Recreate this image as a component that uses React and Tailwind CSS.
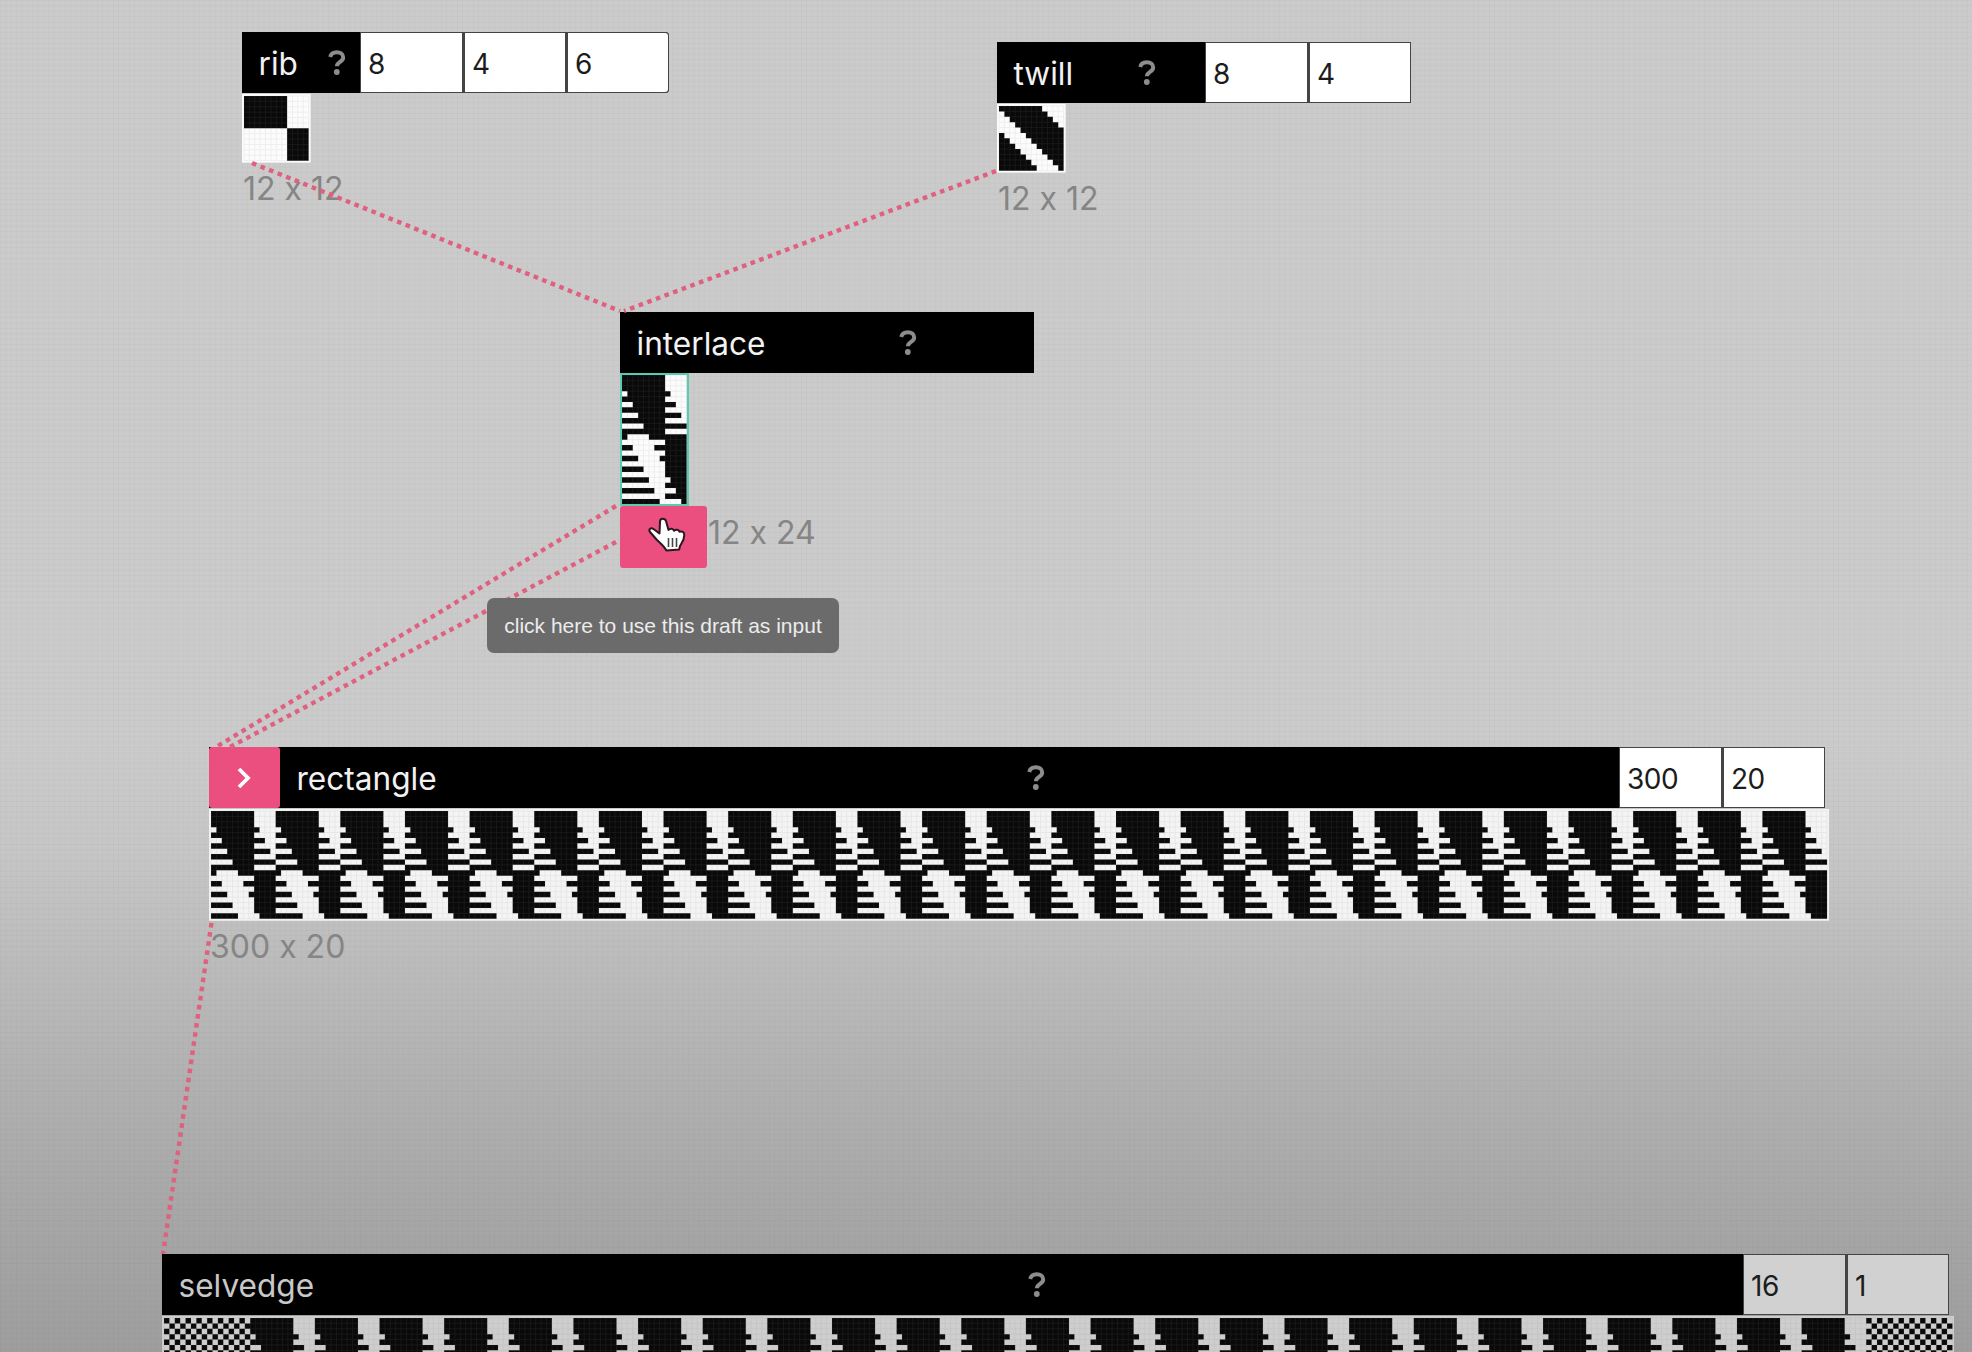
const SANS = "font-['Inter','Liberation_Sans',sans-serif]";
const CELL = 5.387;

const mod = (n, m) => ((n % m) + m) % m;
const rib = (r, c) => (mod(r, 12) < 6 ? mod(c, 12) < 8 : mod(c, 12) >= 8);
const twill = (r, c) => mod(c - r, 12) < 8;
const interlace = (r, c) => (r % 2 === 0 ? rib(r / 2, c) : twill((r - 1) / 2, c));
const selvedge = (r, c) => (c < 16 || c >= 316 ? (r + c) % 2 === 0 : interlace(r, c - 16));

function Draft({ cols, rows, fn, pad = 2, base = '#fcfcfc', ink = '#090909' }) {
  const w = cols * CELL;
  const h = rows * CELL;
  let d = '';
  for (let r = 0; r < rows; r++) {
    let c = 0;
    while (c < cols) {
      if (!fn(r, c)) { c++; continue; }
      let e = c;
      while (e < cols && fn(r, e)) e++;
      d += `M${(c * CELL).toFixed(2)} ${(r * CELL).toFixed(2)}h${((e - c) * CELL).toFixed(2)}v${CELL}H${(c * CELL).toFixed(2)}z`;
      c = e;
    }
  }
  let g = '';
  for (let c = 0; c <= cols; c++) g += `M${(c * CELL).toFixed(2)} 0v${h.toFixed(2)}`;
  for (let r = 0; r <= rows; r++) g += `M0 ${(r * CELL).toFixed(2)}h${w.toFixed(2)}`;
  return (
    <svg className="block shrink-0" width={w + pad * 2} height={h + pad * 2} viewBox={`${-pad} ${-pad} ${w + pad * 2} ${h + pad * 2}`}>
      <rect x={-pad} y={-pad} width={w + pad * 2} height={h + pad * 2} fill={base} />
      <path d={d} fill={ink} />
      <path d={g} stroke="#8a8a8a" strokeWidth="0.9" opacity="0.12" />
    </svg>
  );
}

function Help() {
  return (
    <svg className="mt-[18px] shrink-0" width="18" height="26" viewBox="0 0 18 26" fill="none">
      <path d="M2.2 7C3 3.8 5.6 2.2 8.8 2.2c3.600 0 6.400 2.100 6.400 5.300 0 4.600-6.300 4.300-6.300 8.800" stroke="#8d8d8d" strokeWidth="4" />
      <circle cx="8.800" cy="22" r="2.900" fill="#8d8d8d" />
    </svg>
  );
}

function Field({ value, first, className = 'bg-white' }) {
  return (
    <div className={`flex items-center border-y border-r border-[#444] pt-[2px] pl-[7px] text-[28px] tracking-[-0.5px] text-[#1c1c1c] ${first ? 'w-[103px] border-l' : 'w-[103px] border-l-2'} ${className}`}>
      {value}
    </div>
  );
}

function Header({ name, width, nameWidth, fields = [], fieldClass, lead, nameClass = 'text-[#f2f2f2]' }) {
  return (
    <div className={`flex h-[61px] bg-black ${width}`}>
      {lead}
      <div className={`flex items-center pt-[2px] pl-[16.500px] text-[31.600px] leading-none ${nameWidth} ${nameClass}`}>{name}</div>
      <Help />
      <div className="ml-auto flex">
        {fields.map((f, i) => (
          <Field key={f} value={f} first={i === 0} className={fieldClass} />
        ))}
      </div>
    </div>
  );
}

const Size = ({ children, className = 'pt-[8px]' }) => (
  <div className={`pl-px text-[32px] leading-[34px] whitespace-nowrap text-[#858585] ${className}`}>{children}</div>
);

const links = [
  [252, 163, 620, 311],
  [996, 171, 624, 311],
  [616, 506, 216, 747],
  [616, 542, 230, 747],
  [211.500, 923, 163, 1254],
];

export default function App() {
  return (
    <div className={`relative h-[1352px] w-[1972px] overflow-hidden bg-[linear-gradient(180deg,#cbcbcb_0%,#cbcbcb_55%,#c6c6c6_63%,#bcbcbc_71%,#b0b0b0_81%,#a5a5a5_92%,#9e9e9e_100%)] [font-feature-settings:'calt'_0] ${SANS}`}>
      <div className="absolute inset-0 bg-[linear-gradient(90deg,rgba(0,0,0,0.025)_1px,transparent_1px),linear-gradient(180deg,rgba(0,0,0,0.025)_1px,transparent_1px)] bg-[size:5.387px_5.387px]" />

      <div className="absolute top-[32px] left-[242px] flex flex-col gap-px">
        <Header name="rib" width="w-[427px] rounded-r-[4px]" nameWidth="w-[86px]" fields={['8', '4', '6']} fieldClass="bg-white last:rounded-r-[4px]" />
        <Draft cols={12} rows={12} fn={rib} />
        <Size>12 x 12</Size>
      </div>

      <div className="absolute top-[42px] left-[997px] flex flex-col gap-px">
        <Header name="twill" width="w-[414px]" nameWidth="w-[141px]" fields={['8', '4']} />
        <Draft cols={12} rows={12} fn={twill} />
        <Size>12 x 12</Size>
      </div>

      <div className="absolute top-[312px] left-[620px] flex flex-col">
        <Header name="interlace" width="w-[414px]" nameWidth="w-[279px]" />
        <div className="w-fit border-2 border-[#5cc9b3]"><Draft cols={12} rows={24} fn={interlace} pad={0} /></div>
        <div className="flex">
          <div className="h-[62px] w-[87px] rounded-[3px] bg-[#eb4f80]" />
          <Size className="pt-[10px]">12 x 24</Size>
        </div>
      </div>

      <div className="absolute top-[747px] left-[209px] flex flex-col gap-px">
        <Header
          name="rectangle"
          width="w-[1616px]"
          nameWidth="w-[747px]"
          fields={['300', '20']}
          lead={
            <div className="flex w-[71px] items-center justify-center rounded-[3px] bg-[#eb4f80]">
              <svg width="18" height="24" viewBox="0 0 18 24" fill="none"><path d="M3 3l9 9-9 9" stroke="#fff" strokeWidth="3.800" /></svg>
            </div>
          }
        />
        <Draft cols={300} rows={20} fn={interlace} base="#f4f4f4" />
        <Size>300 x 20</Size>
      </div>

      <div className="absolute top-[1254px] left-[162px] flex flex-col gap-px">
        <Header name="selvedge" width="w-[1787px]" nameWidth="w-[866px]" fields={['16', '1']} fieldClass="bg-[#d1d1d1]" nameClass="text-[#c8c8c8]" />
        <Draft cols={332} rows={8} fn={selvedge} base="#cecece" />
      </div>

      <svg className="pointer-events-none absolute inset-0" width="1972" height="1352">
        {links.map(([x1, y1, x2, y2]) => (
          <line key={`${x1}-${y1}`} x1={x1} y1={y1} x2={x2} y2={y2} stroke="#e0607f" strokeWidth="4.400" strokeDasharray="4.600 4.600" />
        ))}
      </svg>

      <div className="absolute top-[598px] left-[487px] flex h-[55px] w-[352px] items-center justify-center rounded-[7px] bg-[#6b6b6b] font-['Liberation_Sans',sans-serif] text-[21px] whitespace-nowrap text-[#ececec]">
        click here to use this draft as input
      </div>

      <svg className="absolute top-[517px] left-[647px]" width="42" height="38" viewBox="0 0 42 38">
        <path d="M13 4.500c0-3.500 5-3.500 6-.5l2.500 9c1.500-2 5-1.500 5.500.8 1.800-2 5-1.200 5.500 1 2.500-1 4.800.2 4.800 3.200 0 5-2.300 7.500-4.300 11l-.8 3.500-12.700 1c-2.500-4.500-6-7-9.500-10.500l-7-8c-1.800-2.800.8-4.800 3.500-3l6 4.500z" fill="#fff" stroke="#2a1720" strokeWidth="2" strokeLinejoin="round" />
        <path d="M21.500 21v9M25.500 21v9M29.500 21v9" stroke="#444" strokeWidth="1.600" />
      </svg>
    </div>
  );
}
